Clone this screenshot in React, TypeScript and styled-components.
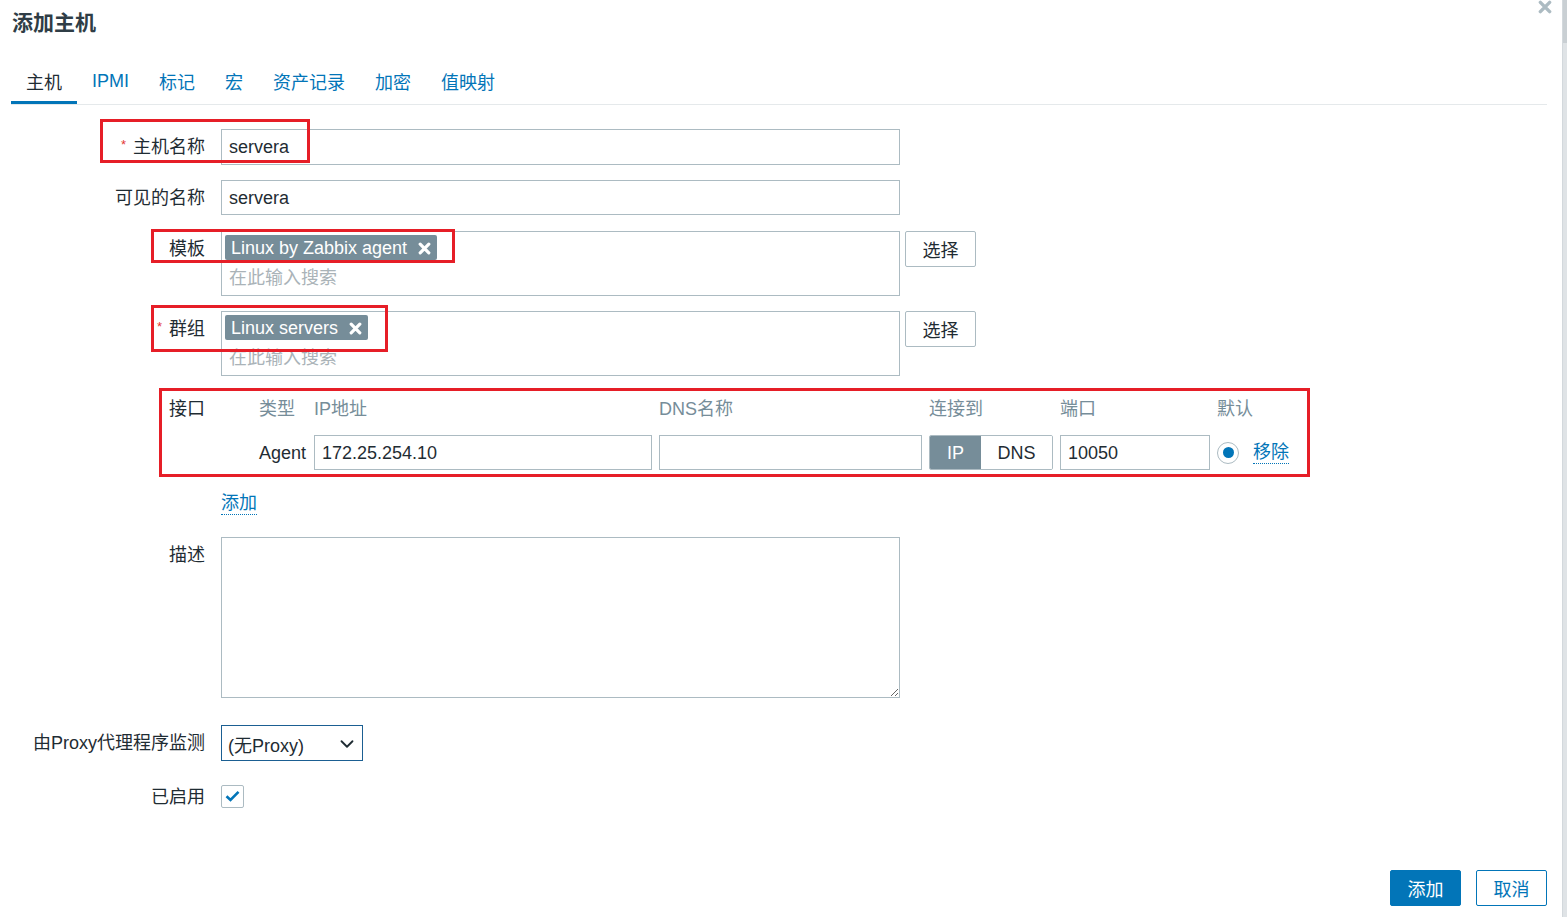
import React from 'react';
import styled, { createGlobalStyle } from 'styled-components';
import { ChevronDown } from 'lucide-react';

const GlobalStyle = createGlobalStyle`
	html, body {
		margin: 0;
		padding: 0;
		background: #fff;
	}
	body {
		font-family: "Liberation Sans", Arial, "Noto Sans CJK SC", sans-serif;
		color: #1f2c33;
	}
	* {
		box-sizing: border-box;
	}
`;

const Page = styled.div`
	display: flex;
	height: 100vh;
	overflow: hidden;
`;

const Dialog = styled.div`
	flex: 1;
	display: flex;
	flex-direction: column;
	padding: 0 15px 11px 11px;
	background: #fff;
`;

const SideStrip = styled.div`
	width: 5px;
	background: linear-gradient(#c9cfd3 0 43px, #dfe3e6 43px);
	border-left: 1px solid #d3d8dc;
`;

const Header = styled.div`
	display: flex;
	justify-content: space-between;
	align-items: flex-start;
	height: 46px;
`;

const Title = styled.h1`
	margin: 0;
	padding-left: 1px;
	font-size: 21px;
	line-height: 46px;
	font-weight: bold;
	color: #2f3d46;
`;

const CloseButton = styled.button`
	border: none;
	background: none;
	padding: 0;
	margin-right: -5px;
	width: 14px;
	height: 14px;
	display: flex;
	cursor: pointer;
`;

const TabBar = styled.div`
	display: flex;
	margin-top: 12px;
	border-bottom: 1px solid #e5e9eb;
`;

const Tab = styled.a<{ $active?: boolean }>`
	display: flex;
	align-items: center;
	height: 46px;
	padding: 3px 15px 0;
	font-size: 18px;
	color: ${(p) => (p.$active ? '#1f2c33' : '#0275b8')};
	border-bottom: 3px solid ${(p) => (p.$active ? '#0275b8' : 'transparent')};
	cursor: pointer;
`;

const Form = styled.div`
	display: flex;
	flex-direction: column;
	padding-top: 24px;
`;

const Row = styled.div<{ $mt?: number }>`
	position: relative;
	display: grid;
	grid-template-columns: 194px auto;
	column-gap: 16px;
	align-items: start;
	margin-top: ${(p) => p.$mt ?? 15}px;
`;

const Label = styled.label`
	display: block;
	height: 35px;
	text-align: right;
	font-size: 18px;
	line-height: 34px;
	padding-top: 1px;
	color: #1f2c33;
	white-space: nowrap;
`;

const Star = styled.span`
	color: #e33734;
	font-size: 13px;
	position: relative;
	top: -4px;
	margin-right: 7px;
`;

const Highlight = styled.div<{ $x: number; $y: number; $w: number; $h: number }>`
	position: absolute;
	left: ${(p) => p.$x}px;
	top: ${(p) => p.$y}px;
	width: ${(p) => p.$w}px;
	height: ${(p) => p.$h}px;
	border: 3px solid #e61e27;
	pointer-events: none;
	z-index: 2;
`;

const TextInput = styled.input<{ $w?: number; $h?: number }>`
	display: block;
	width: ${(p) => p.$w ?? 679}px;
	height: ${(p) => p.$h ?? 36}px;
	border: 1px solid #acbbc2;
	border-radius: 0;
	padding: 1px 7px 0;
	font-family: inherit;
	font-size: 18px;
	color: #1f2c33;
	background: #fff;
	outline: none;
`;

const FieldWithButton = styled.div`
	display: flex;
	align-items: flex-start;
	gap: 5px;
`;

const MultiSelect = styled.div`
	width: 679px;
	height: 65px;
	border: 1px solid #acbbc2;
	padding: 3px;
`;

const Tag = styled.span`
	display: inline-flex;
	align-items: center;
	gap: 11px;
	height: 25px;
	padding: 1px 6px 0;
	border-radius: 2px;
	background: #768d99;
	color: #fff;
	font-size: 18px;
`;

const Placeholder = styled.div`
	padding-left: 4px;
	font-size: 18px;
	line-height: 34px;
	padding-top: 1px;
	color: #aab3b8;
`;

const SelectButton = styled.button`
	width: 71px;
	height: 36px;
	border: 1px solid #acbbc2;
	border-radius: 2px;
	background: #fff;
	font-family: inherit;
	font-size: 18px;
	color: #1f2c33;
	padding: 0;
`;

const InterfaceGrid = styled.div`
	display: grid;
	grid-template-columns: 48px 338px 263px 124px 150px auto;
	grid-template-rows: 34px 35px;
	column-gap: 7px;
	row-gap: 10px;
	padding-left: 38px;
	align-items: center;
`;

const ColHead = styled.div`
	font-size: 18px;
	color: #768d99;
	line-height: 34px;
	padding-top: 1px;
	white-space: nowrap;
`;

const CellText = styled.div`
	font-size: 18px;
	padding-top: 1px;
	color: #1f2c33;
`;

const Toggle = styled.div`
	display: flex;
	height: 35px;
	border: 1px solid #acbbc2;
	border-radius: 2px;
	overflow: hidden;
`;

const ToggleOption = styled.span<{ $on?: boolean; $w: number }>`
	display: flex;
	align-items: center;
	justify-content: center;
	width: ${(p) => p.$w}px;
	padding-top: 1px;
	font-size: 18px;
	background: ${(p) => (p.$on ? '#768d99' : '#fff')};
	color: ${(p) => (p.$on ? '#fff' : '#1f2c33')};
`;

const DefaultCell = styled.div`
	display: flex;
	align-items: center;
	gap: 14px;
`;

const Radio = styled.span`
	width: 22px;
	height: 22px;
	border: 1px solid #acbbc2;
	border-radius: 50%;
	display: flex;
	align-items: center;
	justify-content: center;
	&::after {
		content: '';
		width: 11px;
		height: 11px;
		border-radius: 50%;
		background: #0275b8;
	}
`;

const TextLink = styled.a`
	font-size: 18px;
	color: #0275b8;
	border-bottom: 1px dotted #0275b8;
	cursor: pointer;
	line-height: 22px;
`;

const LinkCell = styled.div`
	display: flex;
	align-items: center;
	height: 36px;
`;

const TextArea = styled.textarea`
	width: 679px;
	height: 161px;
	border: 1px solid #acbbc2;
	border-radius: 0;
	resize: both;
	font-family: inherit;
	font-size: 18px;
	outline: none;
	display: block;
`;

const Select = styled.div`
	width: 142px;
	height: 36px;
	border: 1px solid #1b5f92;
	display: flex;
	align-items: center;
	justify-content: space-between;
	padding: 2px 4px 0 6px;
	font-size: 18px;
	color: #1f2c33;
`;

const CheckBox = styled.span`
	width: 23px;
	height: 23px;
	border: 1px solid #acbbc2;
	border-radius: 2px;
	display: flex;
	align-items: center;
	justify-content: center;
`;

const CheckCell = styled.div`
	height: 34px;
	display: flex;
	align-items: center;
`;

const Footer = styled.div`
	margin-top: auto;
	display: flex;
	justify-content: flex-end;
	gap: 15px;
`;

const FooterButton = styled.button<{ $primary?: boolean }>`
	width: 71px;
	height: 36px;
	border-radius: 2px;
	border: 1px solid #0275b8;
	background: ${(p) => (p.$primary ? '#0275b8' : '#fff')};
	color: ${(p) => (p.$primary ? '#fff' : '#0275b8')};
	font-family: inherit;
	font-size: 18px;
	padding: 0;
`;

const Cross = ({ size = 13, color = '#fff' }: { size?: number; color?: string }) => (
	<svg width={size} height={size} viewBox="0 0 13 13">
		<path d="M2.2 2.2 L10.8 10.8 M10.8 2.2 L2.2 10.8" stroke={color} strokeWidth="3.2" strokeLinecap="round" />
	</svg>
);

const tabs = ['主机', 'IPMI', '标记', '宏', '资产记录', '加密', '值映射'];

const App: React.FC = () => {
	return (
		<>
			<GlobalStyle />
			<Page>
				<Dialog>
					<Header>
						<Title>添加主机</Title>
						<CloseButton>
							<Cross size={14} color="#acbbc2" />
						</CloseButton>
					</Header>
					<TabBar>
						{tabs.map((t, i) => (
							<Tab key={t} $active={i === 0}>
								{t}
							</Tab>
						))}
					</TabBar>

					<Form>
						<Row $mt={0}>
							<Label>
								<Star>*</Star>主机名称
							</Label>
							<TextInput defaultValue="servera" />
							<Highlight $x={89} $y={-10} $w={210} $h={44} />
						</Row>

						<Row>
							<Label>可见的名称</Label>
							<TextInput $h={35} defaultValue="servera" />
						</Row>

						<Row $mt={16}>
							<Label>模板</Label>
							<FieldWithButton>
								<MultiSelect>
									<Tag>
										Linux by Zabbix agent
										<Cross />
									</Tag>
									<Placeholder>在此输入搜索</Placeholder>
								</MultiSelect>
								<SelectButton>选择</SelectButton>
							</FieldWithButton>
							<Highlight $x={140} $y={-2} $w={304} $h={34} />
						</Row>

						<Row>
							<Label>
								<Star>*</Star>群组
							</Label>
							<FieldWithButton>
								<MultiSelect>
									<Tag>
										Linux servers
										<Cross />
									</Tag>
									<Placeholder>在此输入搜索</Placeholder>
								</MultiSelect>
								<SelectButton>选择</SelectButton>
							</FieldWithButton>
							<Highlight $x={140} $y={-6} $w={237} $h={47} />
						</Row>

						<Row>
							<Label>接口</Label>
							<InterfaceGrid>
								<ColHead>类型</ColHead>
								<ColHead>IP地址</ColHead>
								<ColHead>DNS名称</ColHead>
								<ColHead>连接到</ColHead>
								<ColHead>端口</ColHead>
								<ColHead>默认</ColHead>

								<CellText>Agent</CellText>
								<TextInput $w={338} $h={35} defaultValue="172.25.254.10" />
								<TextInput $w={263} $h={35} defaultValue="" />
								<Toggle>
									<ToggleOption $on $w={51}>
										IP
									</ToggleOption>
									<ToggleOption $w={71}>DNS</ToggleOption>
								</Toggle>
								<TextInput $w={150} $h={35} defaultValue="10050" />
								<DefaultCell>
									<Radio />
									<TextLink>移除</TextLink>
								</DefaultCell>
							</InterfaceGrid>
							<Highlight $x={148} $y={-3} $w={1151} $h={89} />
						</Row>

						<Row>
							<span />
							<LinkCell>
								<TextLink>添加</TextLink>
							</LinkCell>
						</Row>

						<Row $mt={16}>
							<Label>描述</Label>
							<TextArea />
						</Row>

						<Row $mt={27}>
							<Label>由Proxy代理程序监测</Label>
							<Select>
								<span>(无Proxy)</span>
								<ChevronDown size={22} strokeWidth={2} color="#1f2c33" />
							</Select>
						</Row>

						<Row $mt={18}>
							<Label>已启用</Label>
							<CheckCell>
								<CheckBox>
									<svg width="15" height="12" viewBox="0 0 15 12">
										<path d="M1.5 6.2 L5.5 10 L13.5 1.8" fill="none" stroke="#0275b8" strokeWidth="2.6" />
									</svg>
								</CheckBox>
							</CheckCell>
						</Row>
					</Form>

					<Footer>
						<FooterButton $primary>添加</FooterButton>
						<FooterButton>取消</FooterButton>
					</Footer>
				</Dialog>
				<SideStrip />
			</Page>
		</>
	);
};

export default App;
